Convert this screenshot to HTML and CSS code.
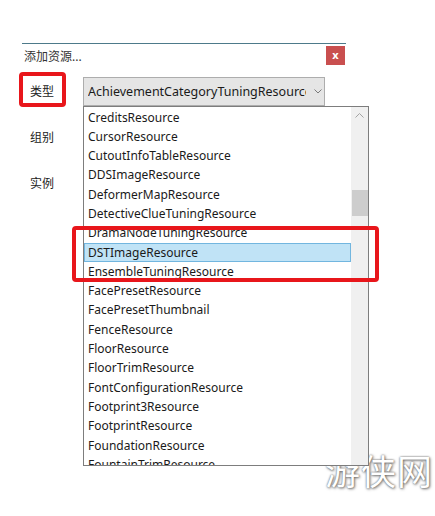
FILE: index.html
```html
<!DOCTYPE html>
<html lang="zh-CN">
<head>
    <meta charset="UTF-8">
    <meta name="viewport" content="width=device-width, initial-scale=1.0">
    <title>添加资源</title>
    <link rel="stylesheet" href="styles.css">
</head>
<body>

    <div class="dialog">
        <div class="title-bar">
            <span class="title">添加资源...</span>
            <span class="close-btn">x</span>
        </div>

        <div class="form">
            <div class="form-row">
                <div class="label">
                    <span class="mark mark-label"></span>
                    类型
                </div>
                <div class="select">
                    <span class="select-text">AchievementCategoryTuningResource</span>
                    <svg class="select-arrow" width="8" height="5" viewBox="0 0 8 5">
                        <path d="M0.5 0.5 L4 4 L7.5 0.5" fill="none" stroke="#7a7a7a" stroke-width="1"/>
                    </svg>

                    <div class="listbox">
                        <ul class="items">
                            <li>CreditsResource</li>
                            <li>CursorResource</li>
                            <li>CutoutInfoTableResource</li>
                            <li>DDSImageResource</li>
                            <li>DeformerMapResource</li>
                            <li>DetectiveClueTuningResource</li>
                            <li>DramaNodeTuningResource</li>
                            <li class="selected">DSTImageResource</li>
                            <li>EnsembleTuningResource</li>
                            <li>FacePresetResource</li>
                            <li>FacePresetThumbnail</li>
                            <li>FenceResource</li>
                            <li>FloorResource</li>
                            <li>FloorTrimResource</li>
                            <li>FontConfigurationResource</li>
                            <li>Footprint3Resource</li>
                            <li>FootprintResource</li>
                            <li>FoundationResource</li>
                            <li>FountainTrimResource</li>
                        </ul>
                        <div class="scrollbar">
                            <div class="scroll-up">
                                <svg width="9" height="5" viewBox="0 0 9 5">
                                    <path d="M0.5 4.5 L4.5 0.5 L8.5 4.5" fill="none" stroke="#a3a3a3" stroke-width="1"/>
                                </svg>
                            </div>
                            <div class="scroll-thumb"></div>
                        </div>
                        <span class="mark mark-list"></span>
                    </div>
                </div>
            </div>

            <div class="form-row">
                <div class="label">组别</div>
                <div class="field"></div>
            </div>

            <div class="form-row">
                <div class="label">实例</div>
                <div class="field"></div>
            </div>
        </div>
    </div>

    <div class="watermark">游侠网</div>

</body>
</html>
```

FILE: styles.css
```css
html {
    height: 100%;
}

body {
    margin: 0;
    padding: 0;
    min-height: 516px;
    background: #ffffff;
    font-family: "Noto Sans", "Noto Sans CJK SC", sans-serif;
    font-size: 12px;
    color: #1a1a1a;
}

.dialog {
    width: 324px;
    padding-top: 43px;
    margin-left: 22px;
    height: 473px;
}

.title-bar {
    display: flex;
    justify-content: space-between;
    align-items: center;
    height: 19px;
    padding: 2px 1px 0 2px;
    border-top: 1px solid #4d7a8a;
}

.title {
    color: #333;
}

.close-btn {
    width: 19px;
    height: 19px;
    background: #c94f4f;
    color: white;
    font-size: 11px;
    font-weight: bold;
    line-height: 17px;
    text-align: center;
}

.form {
    margin-top: 3px;
}

.form-row {
    display: flex;
    align-items: center;
    height: 46px;
}

.label {
    position: relative;
    width: 53px;
    padding-left: 8px;
    color: #222;
}

/* red annotation frames */
.mark {
    position: absolute;
    border: 4px solid #e8161b;
    border-radius: 4px;
    box-sizing: border-box;
}

.mark-label {
    left: -3px;
    top: -10px;
    width: 47px;
    height: 35px;
}

.mark-list {
    left: -12px;
    top: 119px;
    width: 307px;
    height: 56px;
    z-index: 2;
}

.select {
    position: relative;
    display: flex;
    align-items: center;
    width: 242px;
    height: 29px;
    box-sizing: border-box;
    background: #e5e5e5;
    border: 1px solid #adadad;
    padding-left: 4px;
}

.select-text {
    width: 218px;
    overflow: hidden;
    white-space: nowrap;
    font-size: 12.5px;
}

.select-arrow {
    margin-left: 8px;
}

.field {
    width: 242px;
    height: 22px;
}

.listbox {
    position: absolute;
    left: -1px;
    top: 28px;
    z-index: 1;
    display: flex;
    width: 286px;
    height: 360px;
    box-sizing: border-box;
    background: white;
    border: 1px solid #7d7d7d;
}

.items {
    flex: 1;
    margin: 0;
    padding: 1px 0 0;
    list-style: none;
    overflow: hidden;
}

.items li {
    height: 19.3px;
    line-height: 19.3px;
    padding-left: 4px;
    white-space: nowrap;
    box-sizing: border-box;
}

.items li.selected {
    background: #c0e3f6;
    border: 1px solid #72b6df;
    padding-left: 3px;
    line-height: 17.3px;
}

.scrollbar {
    position: relative;
    width: 17px;
    background: #f0f0f0;
}

.scroll-up {
    display: flex;
    justify-content: center;
    align-items: center;
    height: 17px;
}

.scroll-thumb {
    position: absolute;
    left: 1px;
    right: 0;
    top: 83px;
    height: 26px;
    background: #cdcdcd;
}

.watermark {
    position: absolute;
    left: 325px;
    top: 444px;
    font-family: "Noto Sans CJK SC", sans-serif;
    font-size: 35px;
    letter-spacing: 1px;
    color: #ffffff;
    text-shadow: 0 0 2px #5a5a5a, 1px 1px 3px #7a7a7a;
}
```
